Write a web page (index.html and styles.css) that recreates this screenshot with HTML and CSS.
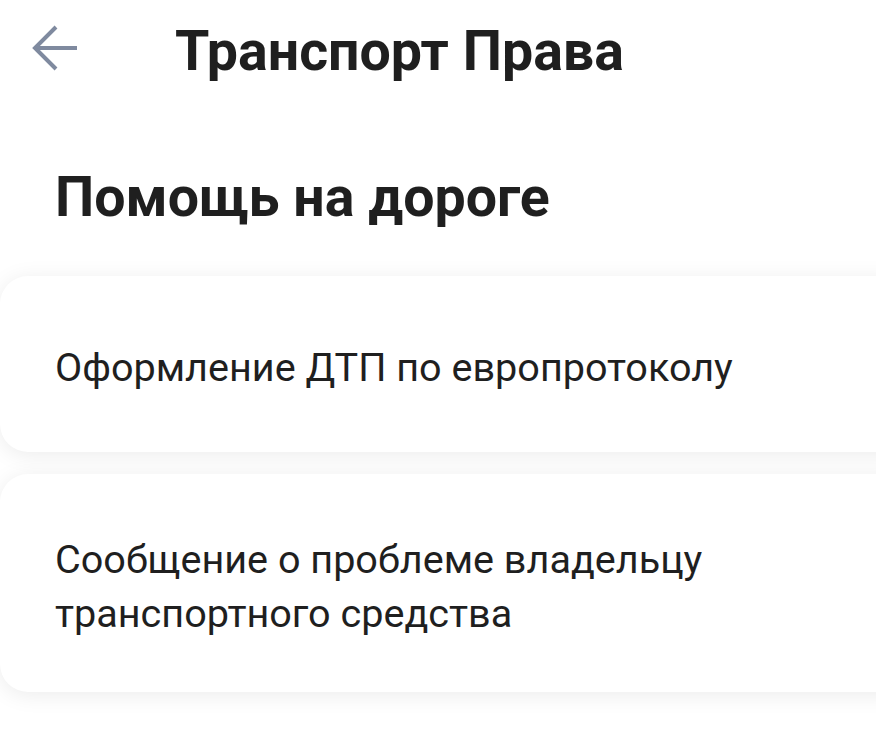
FILE: index.html
```html
<!DOCTYPE html>
<html lang="ru">
<head>
<meta charset="utf-8">
<title>Транспорт Права</title>
<link rel="stylesheet" href="styles.css">
</head>
<body>
<div class="screen">
  <header class="topbar">
    <button class="back" aria-label="Назад">
      <svg width="48" height="48" viewBox="0 0 48 48" fill="none" stroke="#7f8a9f" stroke-width="4" stroke-linecap="butt">
        <path d="M4 24 H46"/>
        <path d="M25 3 L4 24 L25 45"/>
      </svg>
    </button>
    <h1 class="title">Транспорт Права</h1>
  </header>
  <h2 class="section">Помощь на дороге</h2>
  <ul class="cards">
    <li class="card card-one">Оформление ДТП по европротоколу</li>
    <li class="card card-two">Сообщение о проблеме владельцу<br>транспортного средства</li>
  </ul>
</div>
</body>
</html>
```
FILE: styles.css
```css
html, body {
  margin: 0;
  padding: 0;
  background: #ffffff;
  overflow: hidden;
}
.screen {
  width: 876px;
  height: 749px;
  font-family: Roboto, "Noto Sans", sans-serif;
  color: #1f1f1f;
}
.topbar {
  display: flex;
  align-items: center;
  height: 104px;
  padding-left: 31px;
}
.back {
  display: flex;
  background: none;
  border: 0;
  padding: 0;
  width: 48px;
  height: 48px;
  margin-top: -8px;
}
.title {
  margin: 0 0 0 96px;
  font-size: 55.5px;
  font-weight: 700;
  line-height: 104px;
}
.section {
  margin: 62px 0 0 55px;
  font-size: 55.5px;
  font-weight: 700;
  line-height: 64px;
}
.cards {
  list-style: none;
  margin: 46px 0 0 0;
  padding: 0;
  display: flex;
  flex-direction: column;
  gap: 22px;
}
.card {
  box-sizing: border-box;
  background: #ffffff;
  border-radius: 28px;
  margin-right: -40px;
  box-shadow: 0 3px 22px rgba(0, 0, 0, 0.08);
  padding: 7px 0 0 55px;
  font-size: 39.6px;
  line-height: 54px;
  display: flex;
  align-items: center;
}
.card-one {
  height: 176px;
}
.card-two {
  height: 218px;
}
```
